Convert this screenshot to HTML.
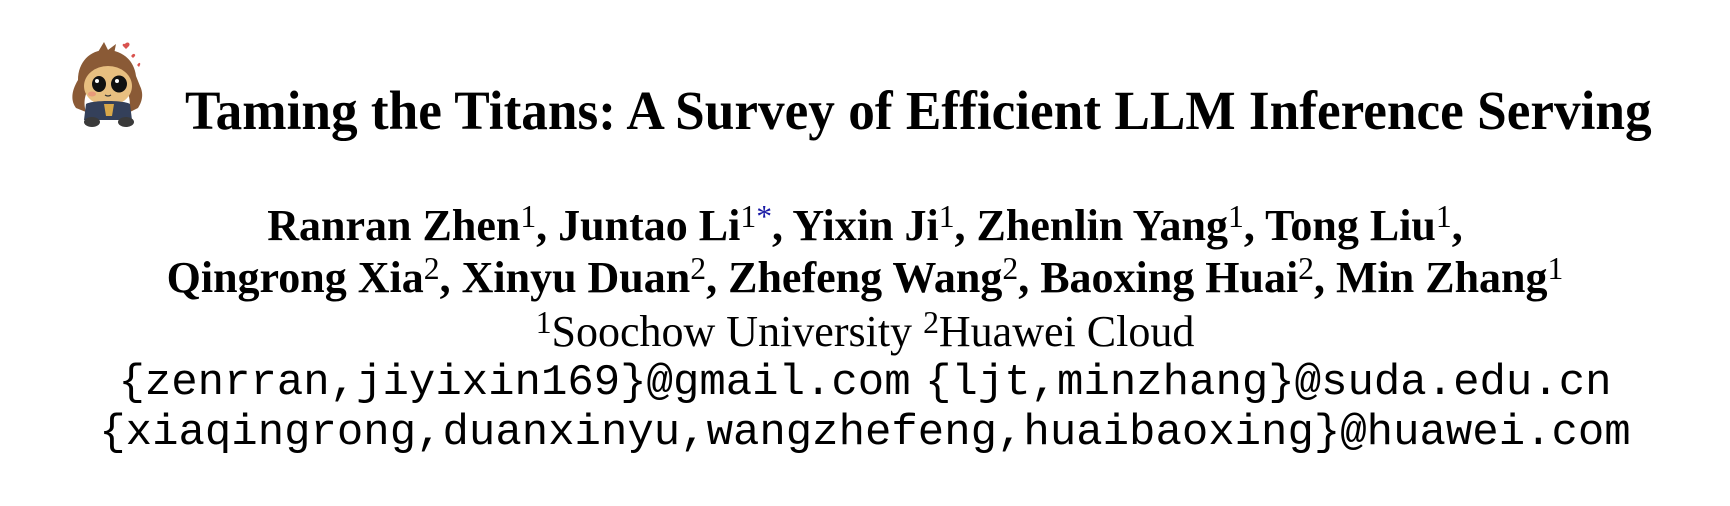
<!DOCTYPE html>
<html><head><meta charset="utf-8"><style>
html,body{margin:0;padding:0;background:#fff;width:1730px;height:506px;overflow:hidden}
.t{position:absolute;white-space:nowrap;color:#000}
.serif{font-family:"Liberation Serif",serif}
.b{font-weight:bold}
.mono{font-family:"Liberation Mono",monospace}
sup{font-size:0.72em;font-weight:normal;vertical-align:0;position:relative;top:-0.4em}
.c{left:0;width:1730px;text-align:center}
</style></head><body>
<svg style="position:absolute;left:68px;top:40px" width="90" height="90" viewBox="0 0 90 90">
<path d="M57 4c2-3 6-1 4 2l-3 3-3-3c-1-1 0-3 2-2z" fill="#d9534f"/>
<path d="M64 15c1-2 4-1 3 1l-2 2-2-2z" fill="#d9534f"/>
<path d="M70 24c1-2 3-1 2 1l-1 2-2-2z" fill="#d9534f"/>
<path d="M10 40c0-18 12-30 28-30 16 0 28 10 30 26l4 10c4 8 2 16-2 22l-8 4c0-8 0-14-2-18L18 54c-2 6-2 12 0 18l-10-4c-6-8-4-18 2-28z" fill="#8a5a36"/>
<path d="M30 12l6-10 4 8 8-6-2 10z" fill="#8a5a36"/>
<ellipse cx="40" cy="46" rx="24" ry="20" fill="#e8bf80"/>
<ellipse cx="31" cy="44" rx="7" ry="8" fill="#111"/>
<ellipse cx="51" cy="44" rx="8" ry="8.5" fill="#111"/>
<circle cx="29" cy="41" r="2" fill="#fff"/><circle cx="49" cy="41" r="2" fill="#fff"/>
<ellipse cx="24" cy="54" rx="4" ry="2.5" fill="#e89a7a"/>
<path d="M37 55q3 2 6 0" stroke="#333" stroke-width="1.2" fill="none"/>
<path d="M18 64c6-4 38-4 44 0l2 16H16z" fill="#34405a"/>
<path d="M36 64h10l-2 12h-6z" fill="#d9a84a"/>
<ellipse cx="24" cy="82" rx="8" ry="5" fill="#3a3a3a"/>
<ellipse cx="58" cy="82" rx="8" ry="5" fill="#3a3a3a"/>
</svg>
<div class="t serif b" style="left:185px;top:76px;font-size:55px;line-height:70px;transform:scaleX(0.968);transform-origin:0 0">Taming the Titans: A Survey of Efficient LLM Inference Serving</div>
<div class="t serif b c" style="top:200px;font-size:44px;line-height:52px">Ranran Zhen<sup>1</sup>, Juntao Li<sup>1<span style="color:#1a1aa6">*</span></sup>, Yixin Ji<sup>1</sup>, Zhenlin Yang<sup>1</sup>, Tong Liu<sup>1</sup>,</div>
<div class="t serif b c" style="top:252px;font-size:44px;line-height:52px">Qingrong Xia<sup>2</sup>, Xinyu Duan<sup>2</sup>, Zhefeng Wang<sup>2</sup>, Baoxing Huai<sup>2</sup>, Min Zhang<sup>1</sup></div>
<div class="t serif c" style="top:306px;font-size:44px;line-height:52px"><sup>1</sup>Soochow University <sup>2</sup>Huawei Cloud</div>
<div class="t mono c" style="top:357px;font-size:44px;line-height:52px">{zenrran,jiyixin169}@gmail.com<span style="letter-spacing:-12px"> </span>{ljt,minzhang}@suda.edu.cn</div>
<div class="t mono c" style="top:407px;font-size:44px;line-height:52px">{xiaqingrong,duanxinyu,wangzhefeng,huaibaoxing}@huawei.com</div>
</body></html>
